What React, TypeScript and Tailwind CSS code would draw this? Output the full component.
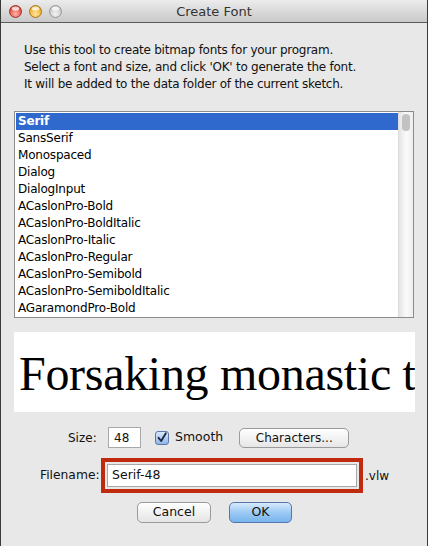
import React from "react";

const fonts = [
  "Serif",
  "SansSerif",
  "Monospaced",
  "Dialog",
  "DialogInput",
  "ACaslonPro-Bold",
  "ACaslonPro-BoldItalic",
  "ACaslonPro-Italic",
  "ACaslonPro-Regular",
  "ACaslonPro-Semibold",
  "ACaslonPro-SemiboldItalic",
  "AGaramondPro-Bold",
];

const ui = { fontFamily: '"Lucida Grande", "DejaVu Sans", sans-serif' };

function Light({ color }: { color: string }) {
  const map: Record<string, [string, string, string]> = {
    red: ["#ffb3a8", "#e0443a", "#8c1a12"],
    yellow: ["#ffe6a0", "#f0a81e", "#9a6208"],
    gray: ["#f4f4f4", "#c4c4c4", "#8a8a8a"],
  };
  const [a, b, c] = map[color];
  return (
    <svg width="13" height="13" viewBox="0 0 13 13">
      <defs>
        <radialGradient id={"g" + color} cx="50%" cy="70%" r="60%">
          <stop offset="0%" stopColor={a} />
          <stop offset="100%" stopColor={b} />
        </radialGradient>
      </defs>
      <circle cx="6.5" cy="6.5" r="6" fill={`url(#g${color})`} stroke={c} strokeWidth="0.8" />
      <ellipse cx="6.5" cy="3.6" rx="3.6" ry="2.2" fill="white" opacity="0.75" />
    </svg>
  );
}

export default function App() {
  return (
    <div
      className="w-[428px] h-[546px] bg-[#e8e8e8] border-x border-[#3a3a3a] flex flex-col overflow-hidden text-[#111]"
      style={ui}
    >
      {/* Title bar */}
      <div className="h-[23px] shrink-0 grid grid-cols-[1fr_auto_1fr] items-center bg-gradient-to-b from-[#ececec] to-[#c9c9c9] border-b border-[#5a5a5a]">
        <div className="flex items-center gap-[7px] pl-[8px]">
          <Light color="red" />
          <Light color="yellow" />
          <Light color="gray" />
        </div>
        <div className="text-[13px] text-[#333] leading-none">Create Font</div>
        <div />
      </div>

      {/* Description */}
      <div className="pl-[23px] pt-[19px] text-[12px] leading-[17px] tracking-[-0.25px]">
        <div>Use this tool to create bitmap fonts for your program.</div>
        <div>Select a font and size, and click 'OK' to generate the font.</div>
        <div>It will be added to the data folder of the current sketch.</div>
      </div>

      {/* List */}
      <div className="ml-[13px] mt-[18px] w-[400px] h-[207px] border border-[#8c8c8c] bg-white flex">
        <div className="flex-1 flex flex-col pt-[1px] pl-[1px]">
          {fonts.map((f, i) => (
            <div
              key={f}
              className={
                "h-[17px] leading-[17px] pl-[2px] text-[12px] tracking-[-0.2px] " +
                (i === 0 ? "bg-[#2f69ce] text-white font-bold" : "text-black")
              }
            >
              {f}
            </div>
          ))}
        </div>
        <div className="w-[15px] bg-gradient-to-r from-[#e4e4e4] via-[#fafafa] to-[#eeeeee] border-l border-[#dcdcdc] flex justify-center pt-[2px]">
          <div className="w-[8px] h-[17px] rounded-full bg-[#c2c2c2]" />
        </div>
      </div>

      {/* Preview */}
      <div className="ml-[13px] mt-[14px] w-[401px] h-[80px] bg-white overflow-hidden flex items-center">
        <div
          className="pl-[5px] text-[48px] leading-none whitespace-nowrap text-black pt-[3px] tracking-[-0.3px]"
          style={{ fontFamily: '"Liberation Serif", "Times New Roman", serif' }}
        >
          Forsaking monastic t
        </div>
      </div>

      {/* Size row */}
      <div className="mt-[15px] h-[21px] flex items-center text-[12px]">
        <span className="ml-[67px] w-[34px]">Size:</span>
        <div className="ml-[6px] w-[33px] h-[21px] border border-[#a8a8a8] bg-white flex items-center pl-[5px]">
          48
        </div>
        <div className="ml-[14px] w-[14px] h-[14px] rounded-[3px] border border-[#5a78a8] bg-gradient-to-b from-[#dbe9f9] to-[#8fb6e6] flex items-center justify-center">
          <svg width="14" height="14" viewBox="0 0 14 14">
            <path d="M3 6.8 L6 10.5 L11.5 1.5" fill="none" stroke="#1b2a44" strokeWidth="2.2" strokeLinecap="round" strokeLinejoin="round" />
          </svg>
        </div>
        <span className="ml-[6px] text-[12.5px]">Smooth</span>
        <div className="ml-[16px] w-[110px] h-[20px] rounded-[5px] border border-[#9a9a9a] bg-gradient-to-b from-[#ffffff] to-[#e6e6e6] flex items-center justify-center text-[12px]">
          Characters...
        </div>
      </div>

      {/* Filename row */}
      <div className="mt-[10px] flex items-center text-[12px]">
        <span className="ml-[39px] w-[60px] text-[12.3px]">Filename:</span>
        <div className="ml-[1px] w-[262px] h-[35px] border-[4px] border-[#c02a0e] p-[2px]">
          <div className="w-full h-full border border-[#a8a8a8] bg-white flex items-center pl-[4px] text-[12.5px]">
            Serif-48
          </div>
        </div>
        <span className="ml-[2px]">.vlw</span>
      </div>

      {/* Buttons */}
      <div className="mt-[9px] flex">
        <div className="ml-[136px] w-[74px] h-[21px] rounded-[5px] border border-[#9a9a9a] bg-gradient-to-b from-[#ffffff] to-[#e4e4e4] flex items-center justify-center text-[12.5px]">
          Cancel
        </div>
        <div className="ml-[18px] w-[63px] h-[21px] rounded-[5px] border border-[#5576ad] bg-gradient-to-b from-[#d6eafc] via-[#9ccaf4] to-[#78b4ee] flex items-center justify-center text-[12.5px]">
          OK
        </div>
      </div>
    </div>
  );
}
